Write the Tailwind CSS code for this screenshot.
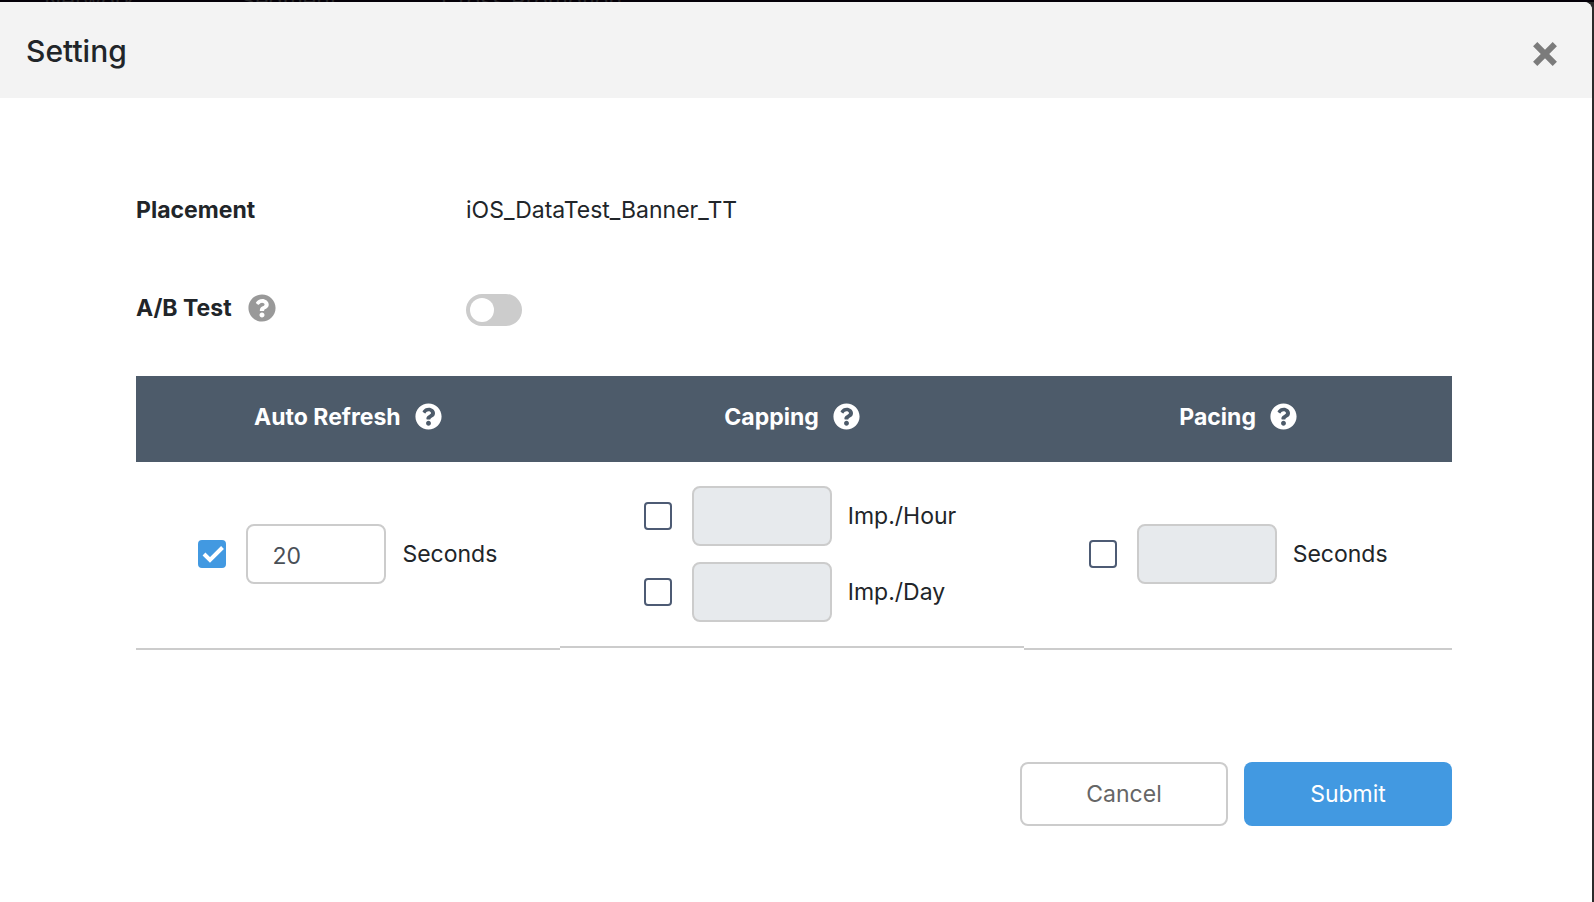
<!DOCTYPE html>
<html lang="en">
<head>
<meta charset="utf-8">
<title>Setting</title>
<script src="https://cdn.jsdelivr.net/npm/@tailwindcss/browser@4"></script>
</head>
<body class="min-h-screen flex flex-col bg-[#2b2b2b] font-['Inter',sans-serif] text-[23px] leading-9 text-[#212529]">
<svg class="hidden">
  <symbol id="help" viewBox="0 0 512 512"><path fill="currentColor" d="M504 256c0 136.997-111.043 248-248 248S8 392.997 8 256C8 119.083 119.043 8 256 8s248 111.083 248 248zM262.655 90c-54.497 0-89.255 22.957-116.549 63.758-3.536 5.286-2.353 12.415 2.715 16.258l34.699 26.31c5.205 3.947 12.621 3.008 16.665-2.122 17.864-22.658 30.113-35.797 57.303-35.797 20.429 0 45.698 13.148 45.698 32.958 0 14.976-12.363 22.667-32.534 33.976C247.128 238.528 216 254.941 216 296v4c0 6.627 5.373 12 12 12h56c6.627 0 12-5.373 12-12v-1.333c0-28.462 83.186-29.647 83.186-106.667 0-58.002-60.165-102-116.531-102zM256 338c-25.365 0-46 20.635-46 46 0 25.364 20.635 46 46 46s46-20.636 46-46c0-25.365-20.635-46-46-46z"/></symbol>
</svg>
<nav class="h-[2px] shrink-0 overflow-hidden bg-[#040008] text-[#242326] flex items-center gap-[104px] pl-11" aria-hidden="true">
  <span>Network</span><span>Segment</span><span>Cross Promotion</span>
</nav>
<main class="grow flex flex-col mr-[2px] bg-white rounded-tr-lg overflow-hidden" role="dialog" aria-labelledby="title">
  <header class="h-24 flex items-center justify-between bg-[#f3f3f3] pl-[26px] pr-[35px]">
    <h1 id="title" class="text-[30px] font-medium pt-0.5">Setting</h1>
    <button type="button" aria-label="Close" class="mt-2 text-[#7b7b7b]">
      <svg class="size-6 block" viewBox="0 0 24 24" fill="none" stroke="currentColor" stroke-width="6"><path d="M2.200 2.200 21.800 21.800M21.800 2.200 2.200 21.800"/></svg>
    </button>
  </header>
  <form class="px-[136px] pr-[140px] pt-[94px] pb-[76px]">
    <div class="flex items-center h-9">
      <span class="w-[330px] font-bold">Placement</span>
      <span>iOS_DataTest_Banner_TT</span>
    </div>
    <div class="flex items-center h-9 mt-[62px]">
      <div class="w-[330px] flex items-center gap-4 font-bold">
        <label for="ab">A/B Test</label>
        <svg class="size-[28px] text-[#999]"><use href="#help"/></svg>
      </div>
      <input id="ab" type="checkbox" role="switch" class="appearance-none mt-1 w-14 h-8 rounded-full bg-[#ccc] before:block before:size-6 before:m-1 before:rounded-full before:bg-white checked:bg-[#4299e1]">
    </div>
    <table class="w-full mt-[50px] table-fixed border-separate border-spacing-0">
      <thead>
        <tr class="h-[86px] bg-[#4d5b6a] text-white">
          <th class="p-0 pb-1 w-[32.2%]"><div class="flex items-center justify-center gap-3.5">Auto Refresh<svg class="size-[27px] mb-0.5"><use href="#help"/></svg></div></th>
          <th class="p-0 pb-1"><div class="flex items-center justify-center gap-3.5">Capping<svg class="size-[27px] mb-0.5"><use href="#help"/></svg></div></th>
          <th class="p-0 pb-1 w-[32.5%]"><div class="flex items-center justify-center gap-3.5">Pacing<svg class="size-[27px] mb-0.5"><use href="#help"/></svg></div></th>
        </tr>
      </thead>
      <tbody>
        <tr class="h-[188px]">
          <td class="p-0 pb-0.5 border-b-2 border-[#ccc]">
            <div class="flex items-center justify-center">
              <span class="grid mr-5">
                <input id="c1" type="checkbox" checked aria-label="Enable auto refresh" class="[grid-area:1/1] appearance-none size-7 rounded-sm border-2 border-[#4d5b74] checked:border-[#4299e1] checked:bg-[#4299e1]">
                <svg class="[grid-area:1/1] size-7 pointer-events-none" viewBox="0 0 28 28" fill="none" stroke="#fff" stroke-width="4"><path d="M6 14l6 6L24.500 7.500"/></svg>
              </span>
              <input id="v1" type="text" value="20" class="w-[140px] h-[60px] rounded-lg border-2 border-[#ccc] px-6 pt-1 text-[#495057]">
              <label for="v1" class="ml-4">Seconds</label>
            </div>
          </td>
          <td class="p-0 align-top">
            <div class="h-[186px] border-b-2 border-[#ccc] pt-6 pl-[84px] flex flex-col gap-4">
              <div class="flex items-center">
                <input type="checkbox" aria-label="Enable hourly cap" class="appearance-none size-7 mr-5 rounded-sm border-2 border-[#4d5b74]">
                <input id="v2" type="text" disabled class="w-[140px] h-[60px] rounded-lg border-2 border-[#ccc] bg-[#e7eaed] px-6">
                <label for="v2" class="ml-4">Imp./Hour</label>
              </div>
              <div class="flex items-center">
                <input type="checkbox" aria-label="Enable daily cap" class="appearance-none size-7 mr-5 rounded-sm border-2 border-[#4d5b74]">
                <input id="v3" type="text" disabled class="w-[140px] h-[60px] rounded-lg border-2 border-[#ccc] bg-[#e7eaed] px-6">
                <label for="v3" class="ml-4">Imp./Day</label>
              </div>
            </div>
          </td>
          <td class="p-0 pb-0.5 border-b-2 border-[#ccc]">
            <div class="flex items-center justify-center">
              <input type="checkbox" aria-label="Enable pacing" class="appearance-none size-7 mr-5 rounded-sm border-2 border-[#4d5b74]">
              <input id="v4" type="text" disabled class="w-[140px] h-[60px] rounded-lg border-2 border-[#ccc] bg-[#e7eaed] px-6">
              <label for="v4" class="ml-4">Seconds</label>
            </div>
          </td>
        </tr>
      </tbody>
    </table>
    <div class="flex justify-end gap-4 mt-28">
      <button type="button" class="w-52 h-16 rounded-lg border-2 border-[#ccc] text-[#666]">Cancel</button>
      <button type="submit" class="w-52 h-16 rounded-lg bg-[#4299e1] text-white">Submit</button>
    </div>
  </form>
</main>
</body>
</html>
